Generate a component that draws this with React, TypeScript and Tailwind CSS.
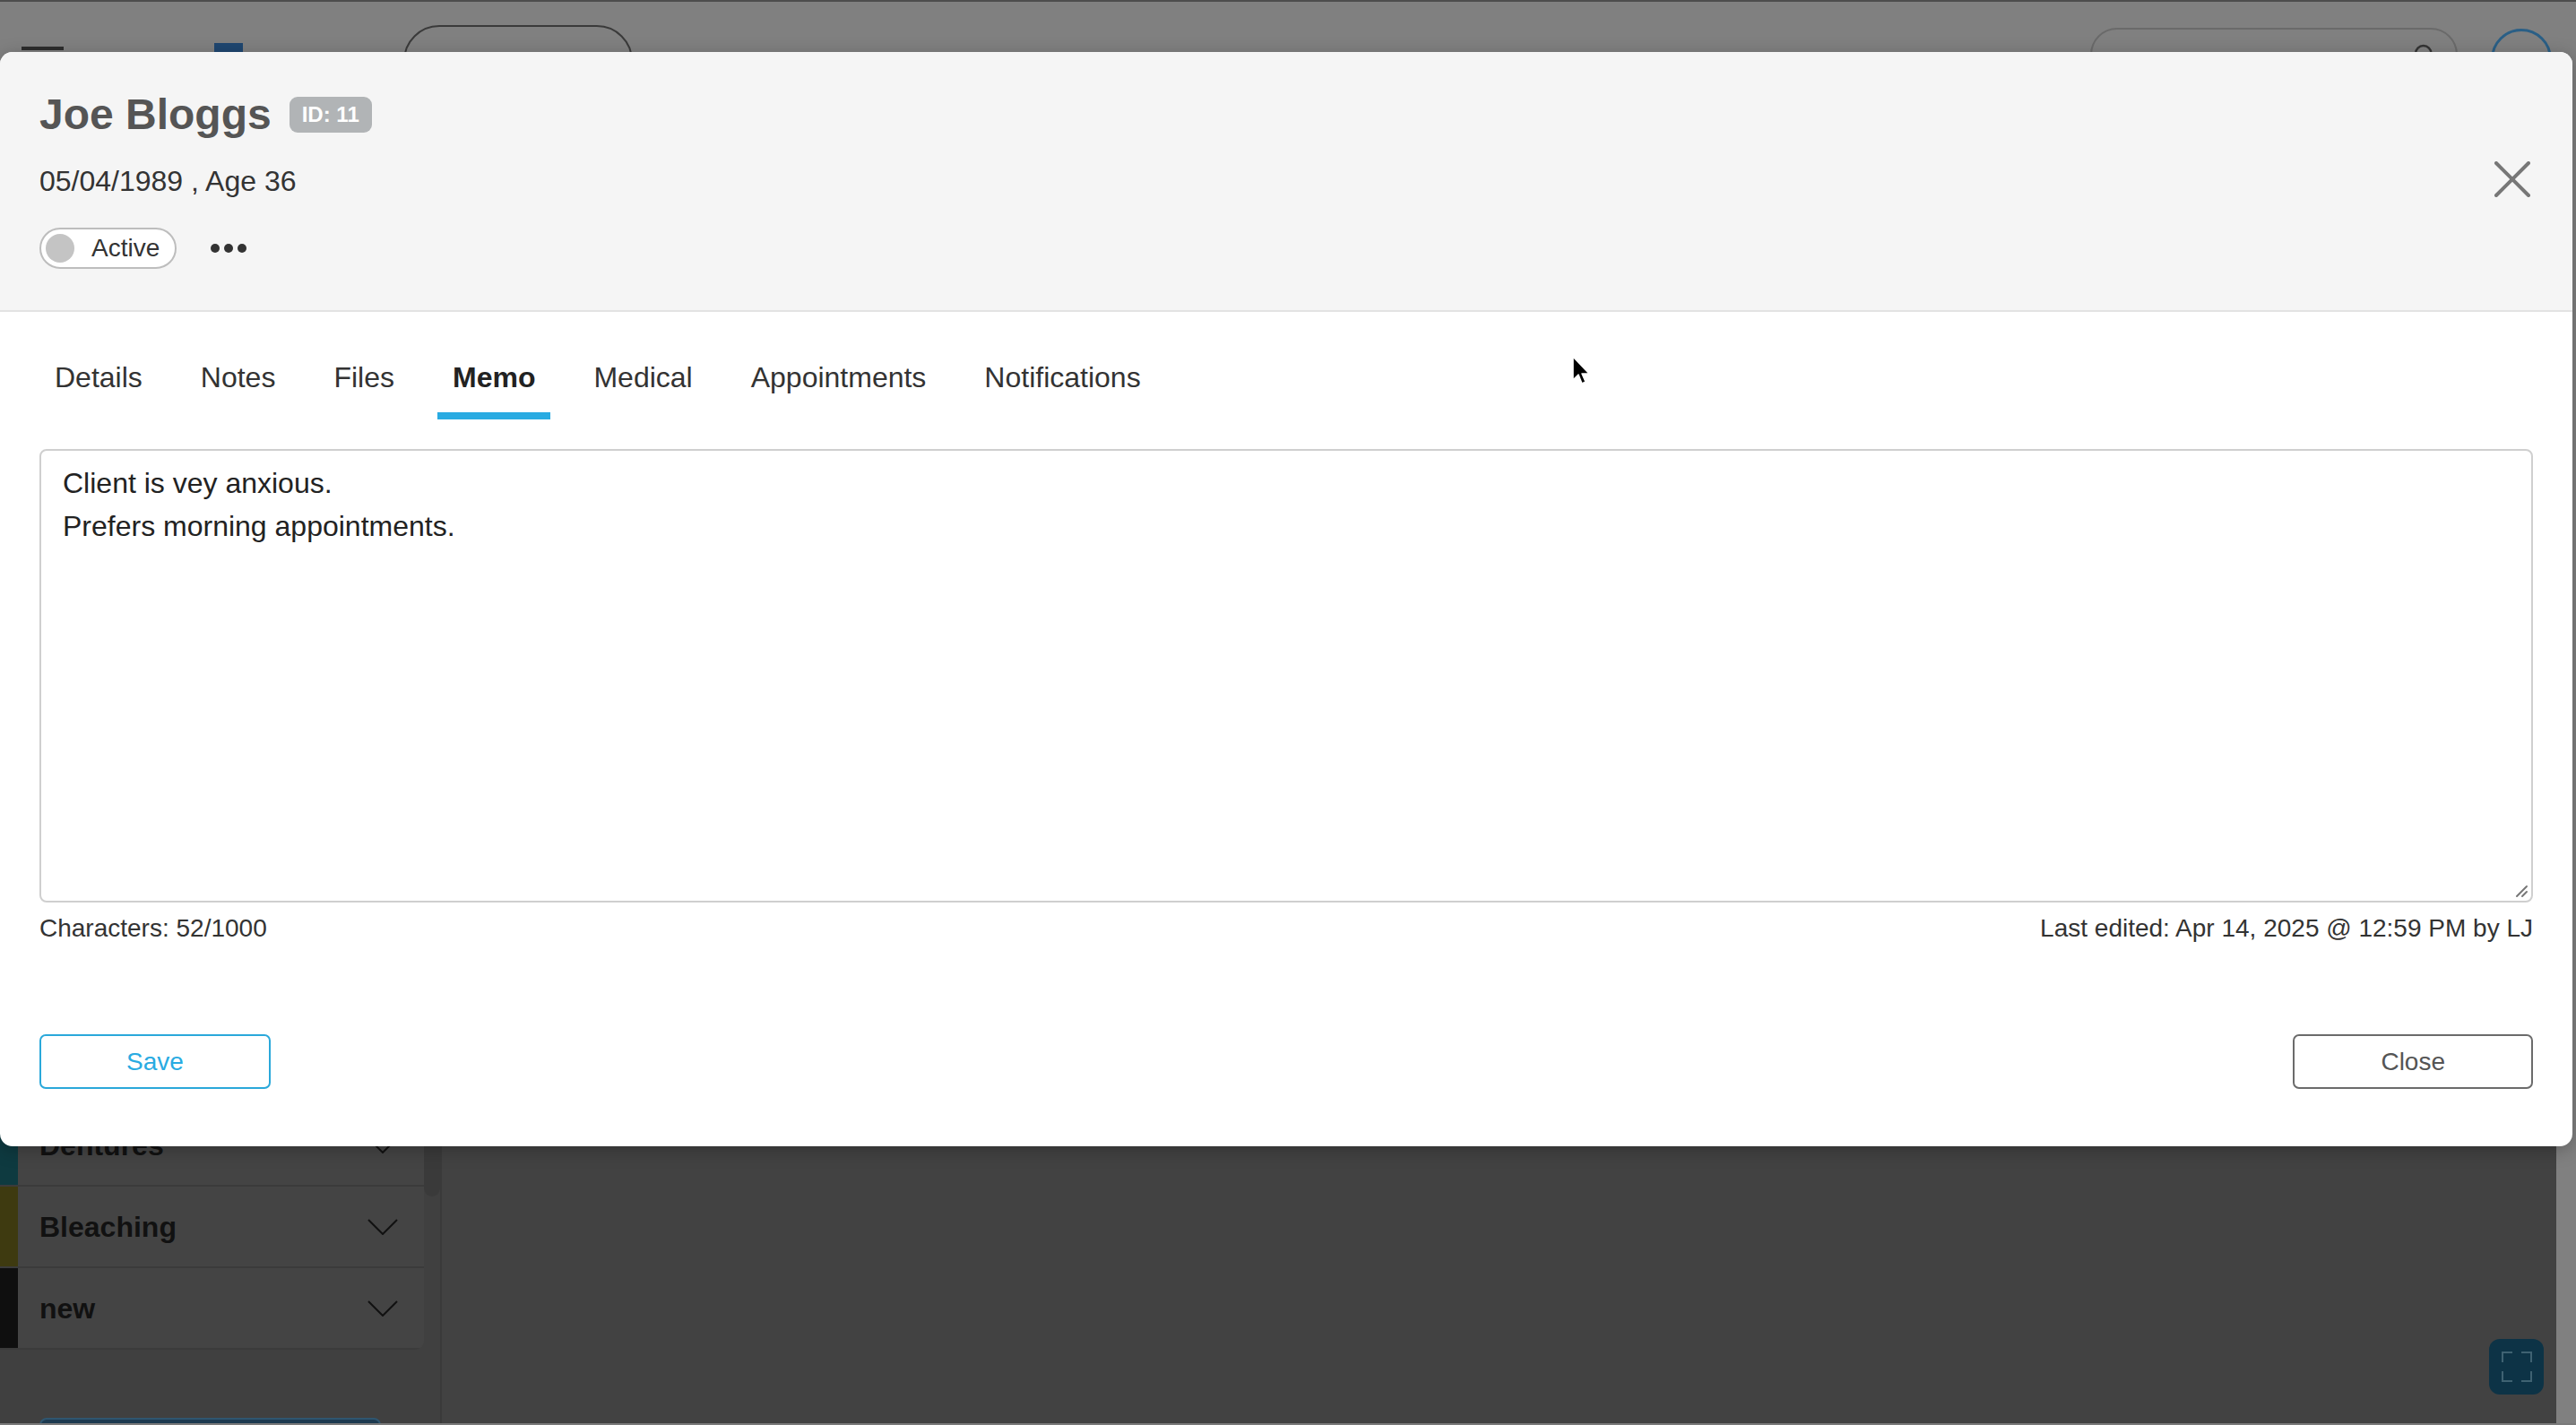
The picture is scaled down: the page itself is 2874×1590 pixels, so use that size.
import React from 'react';

// rows above "Dentures" sit behind the modal, so they carry no label
const rows = [
  { name: '', color: 'bg-[#1d3550]' },
  { name: '', color: 'bg-[#3a1d2c]' },
  { name: '', color: 'bg-[#1d3a2a]' },
  { name: '', color: 'bg-[#2b2b2b]' },
  { name: '', color: 'bg-[#3b2a14]' },
  { name: '', color: 'bg-[#34163a]' },
  { name: '', color: 'bg-[#401818]' },
  { name: '', color: 'bg-[#3f3510]' },
  { name: '', color: 'bg-[#14303f]' },
  { name: '', color: 'bg-[#223a18]' },
  { name: '', color: 'bg-[#3a2432]' },
  { name: '', color: 'bg-[#1a2440]' },
  { name: 'Dentures', color: 'bg-[#0e3a40]' },
  { name: 'Bleaching', color: 'bg-[#3e3a10]' },
  { name: 'new', color: 'bg-[#0f0f0f]' },
];

const tabs = ['Details', 'Notes', 'Files', 'Memo', 'Medical', 'Appointments', 'Notifications'];

function Chevron() {
  return (
    <svg width="34" height="18" viewBox="0 0 34 18" fill="none">
      <polyline points="1,1 17,17 33,1" stroke="#111" strokeWidth="2" />
    </svg>
  );
}

function Backdrop() {
  return (
    <div className="flex flex-col h-full border-t-2 border-[#4d4d4d] border-b-2 border-b-[#7a7a7a]">
      {/* app header, dimmed */}
      <div className="h-[114px] shrink-0 flex items-start bg-[#808080]">
        <div className="ml-[24px] mt-[50px] w-[47px] flex flex-col gap-[10px]">
          <div className="h-[4px] bg-[#2d2d2d]" />
          <div className="h-[4px] bg-[#2d2d2d]" />
          <div className="h-[4px] bg-[#2d2d2d]" />
        </div>
        <div className="ml-[168px] mt-[46px] w-[32px] h-[40px] bg-[#1f4670]" />
        <div className="ml-[179px] mt-[26px] w-[256px] h-[80px] rounded-full border-2 border-[#3a3a3a] flex items-center justify-center text-[28px] text-[#111]">
          Create New
        </div>
        <div className="flex-1" />
        <div className="mt-[29px] w-[410px] h-[60px] rounded-full border-2 border-[#6a6a6a] flex items-center justify-end pr-[20px]">
          <svg width="30" height="30" viewBox="0 0 24 24" fill="none" stroke="#333" strokeWidth="2">
            <circle cx="11" cy="11" r="7" />
            <line x1="16" y1="16" x2="21" y2="21" />
          </svg>
        </div>
        <div className="ml-[37px] mr-[27px] mt-[30px] w-[68px] h-[68px] rounded-full border-[3px] border-[#2a5f86]" />
      </div>

      {/* app body, dimmed */}
      <div className="flex-1 flex min-h-0">
        <div className="w-[493px] shrink-0 bg-[#404040] border-r-2 border-[#3a3a3a] flex pt-[25px] overflow-hidden">
          <div className="w-[473px] flex flex-col">
            <div className="shrink-0 flex flex-col bg-[#444444] rounded-br-[10px] overflow-hidden">
              {rows.map((r, i) => (
                <div key={i} className="shrink-0 h-[91px] flex border-b-2 border-[#3b3b3b]">
                  <div className={`w-[20px] ${r.color}`} />
                  <div className="flex-1 flex items-center justify-between pl-[24px] pr-[29px]">
                    <span className="text-[32px] font-bold text-[#111]">{r.name}</span>
                    <Chevron />
                  </div>
                </div>
              ))}
            </div>
            <div className="mt-[76px] ml-[44px] w-[381px] h-[60px] shrink-0 rounded-[8px] border-2 border-[#2f5670] bg-[#1d3a50]" />
          </div>
          <div className="w-[18px] flex flex-col">
            <div className="shrink-0 mt-[1130px] h-[64px] rounded-full bg-[#3a3a3a]" />
          </div>
        </div>
        <div className="flex-1 bg-[#424242] relative">
          <div className="absolute right-[14px] bottom-[32px] w-[61px] h-[62px] rounded-[12px] bg-[#0d3346] flex items-center justify-center">
            <svg width="34" height="34" viewBox="0 0 34 34" fill="none" stroke="#3f6272" strokeWidth="2">
              <path d="M1 12V1h11M22 1h11v11M33 22v11H22M12 33H1V22" />
            </svg>
          </div>
        </div>
        <div className="w-[22px] bg-[#808080]" />
      </div>
    </div>
  );
}

function MemoModal() {
  return (
    <div className="absolute left-0 top-[58px] w-[2870px] bg-white rounded-[14px] overflow-hidden shadow-[0_4px_20px_rgba(0,0,0,0.25)]">
      <div className="bg-[#f5f5f5] border-b-2 border-[#e3e3e3] px-[44px] pt-[42px] pb-[46px] flex items-center justify-between">
        <div className="flex flex-col">
          <div className="flex items-center gap-[20px]">
            <h1 className="text-[48px] leading-[55px] font-bold text-[#555]">Joe Bloggs</h1>
            <span className="h-[40px] px-[14px] rounded-[9px] bg-[#b1b4b6] text-white font-bold text-[24px] flex items-center">
              ID: 11
            </span>
          </div>
          <p className="mt-[29px] text-[32px] leading-[37px] text-[#333]">05/04/1989 , Age 36</p>
          <div className="mt-[33px] flex items-center">
            <div className="h-[46px] w-[153px] rounded-full border-2 border-[#bdbdbd] bg-white flex items-center pl-[5px]">
              <span className="w-[32px] h-[32px] rounded-full bg-[#c4c4c4]" />
              <span className="ml-[19px] text-[28px] text-[#333]">Active</span>
            </div>
            <div className="ml-[38px] flex gap-[5px]">
              <span className="w-[10px] h-[10px] rounded-full bg-[#333]" />
              <span className="w-[10px] h-[10px] rounded-full bg-[#333]" />
              <span className="w-[10px] h-[10px] rounded-full bg-[#333]" />
            </div>
          </div>
        </div>
        <button className="mr-[2px]">
          <svg width="42" height="40" viewBox="0 0 42 40" fill="none" stroke="#777" strokeWidth="4" strokeLinecap="round">
            <line x1="3" y1="2" x2="39" y2="38" />
            <line x1="39" y1="2" x2="3" y2="38" />
          </svg>
        </button>
      </div>

      <div className="px-[44px] mt-[55px] flex gap-[31px]">
        {tabs.map((t) => (
          <button
            key={t}
            className={
              t === 'Memo'
                ? 'px-[17px] pb-[20px] text-[32px] leading-[37px] font-bold text-[#222] border-b-[8px] border-[#29abe2]'
                : 'px-[17px] pb-[20px] text-[32px] leading-[37px] text-[#333] border-b-[8px] border-transparent'
            }
          >
            {t}
          </button>
        ))}
      </div>

      <div className="px-[44px] pb-[64px]">
        <div className="relative mt-[33px]">
          <textarea
            className="block w-full h-[506px] border-2 border-[#cfcfcf] rounded-[8px] pt-[12px] px-[24px] text-[32px] leading-[48px] text-[#222] font-['Liberation_Sans',Arial,sans-serif] outline-none resize-none"
            defaultValue={'Client is vey anxious.\nPrefers morning appointments.'}
          />
          {/* resize grip */}
          <svg className="absolute right-[4px] bottom-[4px] pointer-events-none" width="18" height="18" viewBox="0 0 18 18" fill="none" stroke="#777" strokeWidth="2" strokeLinecap="round">
            <line x1="4" y1="15" x2="15" y2="4" />
            <line x1="10" y1="15" x2="15" y2="10" />
          </svg>
        </div>
        <div className="mt-[13px] flex justify-between text-[28px] leading-[32px] text-[#333]">
          <span>Characters: 52/1000</span>
          <span>Last edited: Apr 14, 2025 @ 12:59 PM by LJ</span>
        </div>
        <div className="mt-[102px] flex justify-between">
          <button className="h-[61px] px-[95px] rounded-[7px] border-2 border-[#2aa8da] text-[28px] text-[#29abe2]">
            Save
          </button>
          <button className="h-[61px] px-[96px] rounded-[7px] border-2 border-[#6b6b6b] text-[28px] text-[#555]">
            Close
          </button>
        </div>
      </div>
    </div>
  );
}

export default function App() {
  return (
    <div className="w-[2874px] h-[1590px] relative overflow-hidden bg-[#808080] font-['Liberation_Sans',Arial,sans-serif]">
      <Backdrop />
      <MemoModal />
      {/* mouse pointer */}
      <svg className="absolute left-[1754px] top-[397px]" width="22" height="34" viewBox="0 0 22 34">
        <path d="M1 1 L1 27 L7 21 L11 31 L15 29 L11 20 L19 20 Z" fill="#000" stroke="#fff" strokeWidth="1.5" strokeLinejoin="round" />
      </svg>
    </div>
  );
}
